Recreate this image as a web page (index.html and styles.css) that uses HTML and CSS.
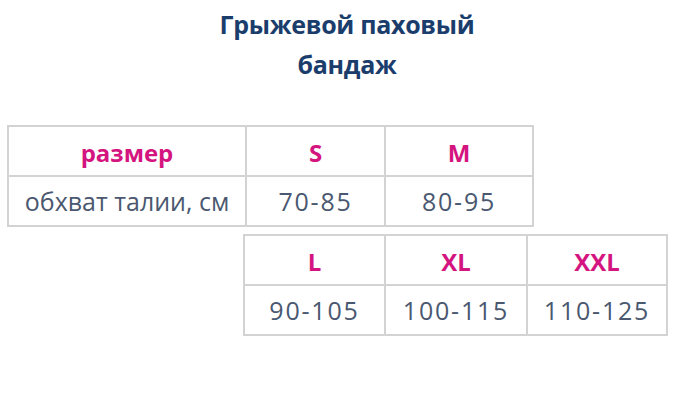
FILE: index.html
```html
<!DOCTYPE html>
<html lang="ru">
<head>
<meta charset="utf-8">
<link rel="stylesheet" href="styles.css">
</head>
<body>
<div class="page">
  <h1 class="title">Грыжевой паховый<br>бандаж</h1>
  <table class="sizes sizes-top">
    <tr class="head">
      <td class="c-label">размер</td>
      <td class="c-s">S</td>
      <td class="c-m">M</td>
    </tr>
    <tr class="vals">
      <td class="label">обхват талии, см</td>
      <td>70-85</td>
      <td>80-95</td>
    </tr>
  </table>
  <table class="sizes sizes-bottom">
    <tr class="head">
      <td class="c-l">L</td>
      <td class="c-xl">XL</td>
      <td class="c-xxl">XXL</td>
    </tr>
    <tr class="vals">
      <td>90-105</td>
      <td>100-115</td>
      <td>110-125</td>
    </tr>
  </table>
</div>
</body>
</html>
```
FILE: styles.css
```css
html, body {
  margin: 0;
  padding: 0;
  background: #ffffff;
}
.page {
  width: 680px;
  height: 409px;
  font-family: "Open Sans", "Noto Sans", sans-serif;
  display: flex;
  flex-direction: column;
  align-items: flex-start;
}
.title {
  align-self: stretch;
  margin: 4px 0 0 0;
  padding-left: 14px;
  text-align: center;
  font-size: 25px;
  font-weight: 700;
  line-height: 40px;
  color: #1b3d6c;
  letter-spacing: -0.3px;
}
.sizes {
  border-collapse: collapse;
  table-layout: fixed;
}
.sizes td {
  border: 2px solid #d3d3d3;
  text-align: center;
  padding: 0;
}
.sizes .head td {
  height: 45px;
  padding-top: 3px;
  font-size: 24px;
  font-weight: 700;
  color: #d4157f;
}
.sizes .vals td {
  height: 48px;
  font-size: 25px;
  color: #4a5870;
  letter-spacing: 1.8px;
}
.sizes .vals td.label {
  font-size: 25px;
  letter-spacing: 0;
}
.sizes-top {
  margin: 41px 0 0 7px;
}
.c-label { width: 236px; }
.c-s { width: 137px; }
.c-m { width: 146px; }
.sizes-bottom {
  margin: 7px 0 0 243px;
}
.c-l { width: 139px; }
.c-xl { width: 140px; }
.c-xxl { width: 138px; }
```
